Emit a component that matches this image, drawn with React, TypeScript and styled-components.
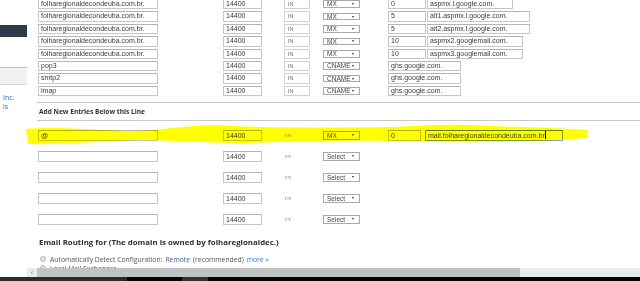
import styled, { createGlobalStyle } from "styled-components";

const GlobalStyle = createGlobalStyle`
  html, body {
    margin: 0;
    padding: 0;
    width: 640px;
    height: 281px;
    overflow: hidden;
    background: #ffffff;
  }
  * { box-sizing: border-box; }
`;

type ZoneRecord = {
  name: string;
  type: string;
  priority?: string;
  target: string;
  targetWidth: number;
};

const records: ZoneRecord[] = [
  { name: "folharegionaldecondeuba.com.br.", type: "MX", priority: "0", target: "aspmx.l.google.com.", targetWidth: 86 },
  { name: "folharegionaldecondeuba.com.br.", type: "MX", priority: "5", target: "alt1.aspmx.l.google.com.", targetWidth: 103 },
  { name: "folharegionaldecondeuba.com.br.", type: "MX", priority: "5", target: "alt2.aspmx.l.google.com.", targetWidth: 103 },
  { name: "folharegionaldecondeuba.com.br.", type: "MX", priority: "10", target: "aspmx2.googlemail.com.", targetWidth: 96 },
  { name: "folharegionaldecondeuba.com.br.", type: "MX", priority: "10", target: "aspmx3.googlemail.com.", targetWidth: 96 },
  { name: "pop3", type: "CNAME", target: "ghs.google.com.", targetWidth: 73 },
  { name: "smtp2", type: "CNAME", target: "ghs.google.com.", targetWidth: 73 },
  { name: "imap", type: "CNAME", target: "ghs.google.com.", targetWidth: 73 },
];

const newRows = [0, 1, 2, 3, 4];

const App = () => {
  return (
    <>
      <GlobalStyle />
      <Screen>
        <Viewport>
          <Sidebar>
            <SideBand />
            <SideTab />
            <SideLinks>
              <SideLink>Inc.</SideLink>
              <SideLink>is</SideLink>
            </SideLinks>
          </Sidebar>

          <Main>
            <RecordList>
              {records.map((r, i) => (
                <RecordRow key={i}>
                  <NameCell>
                    <Field $w={120}>{r.name}</Field>
                  </NameCell>
                  <TtlCell>
                    <Field $w={39}>14400</Field>
                  </TtlCell>
                  <ClassCell>
                    <ClassBox>IN</ClassBox>
                  </ClassCell>
                  <TypeCell>
                    <FakeSelect $h={7.5}>
                      {r.type}
                      <Caret />
                    </FakeSelect>
                  </TypeCell>
                  <ValueCell>
                    {r.priority !== undefined && <Field $w={38}>{r.priority}</Field>}
                    <Field $w={r.targetWidth} $gap={r.priority !== undefined ? 1 : 0}>
                      {r.target}
                    </Field>
                  </ValueCell>
                </RecordRow>
              ))}
            </RecordList>

            <Divider $top={5.5} />
            <SectionLabel>Add New Entries Below this Line</SectionLabel>
            <Divider />

            <NewList>
              {newRows.map((i) => (
                <NewRow key={i}>
                  <NameCell>
                    <Field $w={120} $tall>
                      {i === 0 ? "@" : ""}
                    </Field>
                  </NameCell>
                  <TtlCell>
                    <Field $w={39} $tall>
                      14400
                    </Field>
                  </TtlCell>
                  <ClassCell>
                    <ClassText>IN</ClassText>
                  </ClassCell>
                  <TypeCell>
                    <FakeSelect $h={9}>
                      {i === 0 ? "MX" : "Select"}
                      <Caret />
                    </FakeSelect>
                  </TypeCell>
                  {i === 0 && (
                    <ValueCell>
                      <Field $w={33} $tall>
                        0
                      </Field>
                      <Field $w={138} $gap={4} $tall $focused>
                        mail.folharegionaldecondeuba.com.br
                        <Cursor />
                      </Field>
                    </ValueCell>
                  )}
                </NewRow>
              ))}
            </NewList>

            <Heading>Email Routing for (The domain is owned by folharegionaldec.)</Heading>

            <RadioRow>
              <Radio />
              <Muted>Automatically Detect Configuration:</Muted>
              <Accent>Remote</Accent>
              <Muted>(recommended)</Muted>
              <More>more »</More>
            </RadioRow>
            <RadioRow>
              <Radio />
              <Muted>Local Mail Exchanger</Muted>
            </RadioRow>
          </Main>
        </Viewport>

        <HScroll>
          <ScrollGutter />
          <ScrollArrow>‹</ScrollArrow>
          <ScrollThumb />
          <ScrollTrack />
        </HScroll>

        <Taskbar>
          <TaskSlot $w={127} $c="#2b2b2b" />
          <TaskSlot $w={55} $c="#050505" />
          <TaskSlot $w={26} $c="#333333" />
          <TaskSlot $w={432} $c="#050505" />
        </Taskbar>

        <Highlighter viewBox="0 0 640 281" width="640" height="281">
          <path
            d="M26 129 C 60 126, 90 130, 130 131 C 170 131, 190 123, 230 126 C 280 128, 340 128, 390 127 C 420 126, 440 124, 470 125 C 510 127, 560 128, 588 130 L 588 138 C 560 140, 520 142, 480 142 C 440 143, 420 141, 390 141 C 340 140, 290 142, 240 143 C 200 143, 170 140, 140 140 C 100 141, 60 145, 28 144 Z"
            fill="#ffff00"
          />
        </Highlighter>
      </Screen>
    </>
  );
};

const Screen = styled.div`
  position: relative;
  width: 640px;
  height: 281px;
  display: flex;
  flex-direction: column;
  overflow: hidden;
  font-family: "Liberation Sans", Arial, sans-serif;
`;

const Viewport = styled.div`
  flex: 1;
  display: flex;
  overflow: hidden;
`;

const Sidebar = styled.div`
  width: 27px;
  flex-shrink: 0;
  padding-top: 25px;
  display: flex;
  flex-direction: column;
`;

const SideBand = styled.div`
  height: 12px;
  background: #2b3a48;
`;

const SideTab = styled.div`
  margin-top: 30px;
  height: 18px;
  background: #f1f1f1;
  border-top: 1px solid #c6c6c6;
  border-bottom: 1px solid #dcdcdc;
`;

const SideLinks = styled.div`
  padding-top: 8px;
  padding-left: 3px;
  display: flex;
  flex-direction: column;
`;

const SideLink = styled.span`
  font-family: "Open Sans", "Liberation Sans", sans-serif;
  font-size: 7px;
  line-height: 9px;
  color: #2c6fb8;
`;

const Main = styled.div`
  flex: 1;
  padding-left: 11px;
  margin-top: -1px;
`;

const RecordList = styled.div`
  display: flex;
  flex-direction: column;
  gap: 2px;
`;

const RecordRow = styled.div`
  display: flex;
  align-items: center;
  height: 10.4px;
`;

const NameCell = styled.div`
  width: 185px;
  display: flex;
`;

const TtlCell = styled.div`
  width: 61px;
  display: flex;
`;

const ClassCell = styled.div`
  width: 39px;
  display: flex;
  align-items: center;
`;

const TypeCell = styled.div`
  width: 65px;
  display: flex;
`;

const ValueCell = styled.div`
  display: flex;
`;

const Field = styled.div<{ $w: number; $gap?: number; $tall?: boolean; $focused?: boolean }>`
  width: ${(p) => p.$w}px;
  margin-left: ${(p) => p.$gap ?? 0}px;
  height: ${(p) => (p.$tall ? 11.6 : 10.4)}px;
  border: 1px solid ${(p) => (p.$focused ? "#7da2ce" : "#c6c6c6")};
  border-top-color: ${(p) => (p.$focused ? "#5c87c4" : "#b4b4b4")};
  background: #ffffff;
  padding-left: 2px;
  font-size: 7px;
  line-height: ${(p) => (p.$tall ? 9.6 : 8.4)}px;
  color: #3a3a3a;
  white-space: nowrap;
  overflow: hidden;
  display: flex;
  align-items: center;
`;

const Cursor = styled.span`
  display: inline-block;
  width: 1px;
  height: 8px;
  background: #000;
`;

const ClassBox = styled.div`
  width: 26px;
  height: 10.4px;
  border: 1px solid #d2d2d2;
  padding-left: 3px;
  font-size: 5.5px;
  line-height: 8.4px;
  color: #6a6a6a;
`;

const ClassText = styled.span`
  margin-left: 1px;
  font-family: "Liberation Serif", serif;
  font-size: 5px;
  letter-spacing: 0.5px;
  color: #777;
`;

const FakeSelect = styled.div<{ $h: number }>`
  position: relative;
  width: 37px;
  height: ${(p) => p.$h}px;
  border: 1px solid #a9a9a9;
  background: #fff;
  padding-left: 3px;
  font-size: 6.5px;
  line-height: ${(p) => p.$h - 2}px;
  color: #444;
  display: flex;
  align-items: center;
`;

const Caret = styled.span`
  position: absolute;
  right: 5px;
  top: 50%;
  margin-top: -1px;
  border-left: 1.5px solid transparent;
  border-right: 1.5px solid transparent;
  border-top: 2.5px solid #333;
`;

const Divider = styled.div<{ $top?: number }>`
  height: 1px;
  background: #c8c8c8;
  margin-left: -1px;
  margin-top: ${(p) => p.$top ?? 0}px;
`;

const SectionLabel = styled.div`
  padding-left: 1px;
  height: 17.5px;
  display: flex;
  align-items: center;
  font-family: "Open Sans", "Liberation Sans", sans-serif;
  font-weight: 700;
  font-size: 6.6px;
  line-height: 9px;
  color: #333;
`;

const NewList = styled.div`
  display: flex;
  flex-direction: column;
  gap: 9.4px;
  padding-top: 8.5px;
`;

const NewRow = styled.div`
  display: flex;
  align-items: center;
  height: 11.6px;
`;

const Heading = styled.div`
  margin-top: 11px;
  padding-left: 1px;
  font-family: "Open Sans", "Liberation Sans", sans-serif;
  font-weight: 700;
  font-size: 7.85px;
  line-height: 12px;
  color: #2f2f2f;
`;

const RadioRow = styled.div`
  margin-top: 7px;
  display: flex;
  align-items: center;
  gap: 3px;
  height: 8px;
  padding-left: 2px;
  font-family: "Open Sans", "Liberation Sans", sans-serif;
  font-size: 6.8px;
  & + & {
    margin-top: 1px;
  }
`;

const Radio = styled.span`
  width: 6px;
  height: 6px;
  border-radius: 50%;
  border: 1px solid #b8b8b8;
  background: #e4e4e4;
  margin-right: 1px;
`;

const Muted = styled.span`
  color: #555;
`;

const Accent = styled.span`
  color: #3a5d8e;
`;

const More = styled.span`
  color: #2b80d8;
`;

const HScroll = styled.div`
  height: 9px;
  display: flex;
  flex-shrink: 0;
`;

const ScrollGutter = styled.div`
  width: 27px;
  background: #fff;
`;

const ScrollArrow = styled.div`
  width: 10px;
  background: #eaeaea;
  color: #888;
  font-size: 7px;
  line-height: 9px;
  text-align: center;
`;

const ScrollThumb = styled.div`
  width: 483px;
  background: #c2c2c2;
`;

const ScrollTrack = styled.div`
  flex: 1;
  background: #ececec;
`;

const Taskbar = styled.div`
  height: 4px;
  display: flex;
  flex-shrink: 0;
`;

const TaskSlot = styled.div<{ $w: number; $c: string }>`
  width: ${(p) => p.$w}px;
  background: ${(p) => p.$c};
`;

const Highlighter = styled.svg`
  position: absolute;
  left: 0;
  top: 0;
  pointer-events: none;
  mix-blend-mode: multiply;
`;

export default App;
